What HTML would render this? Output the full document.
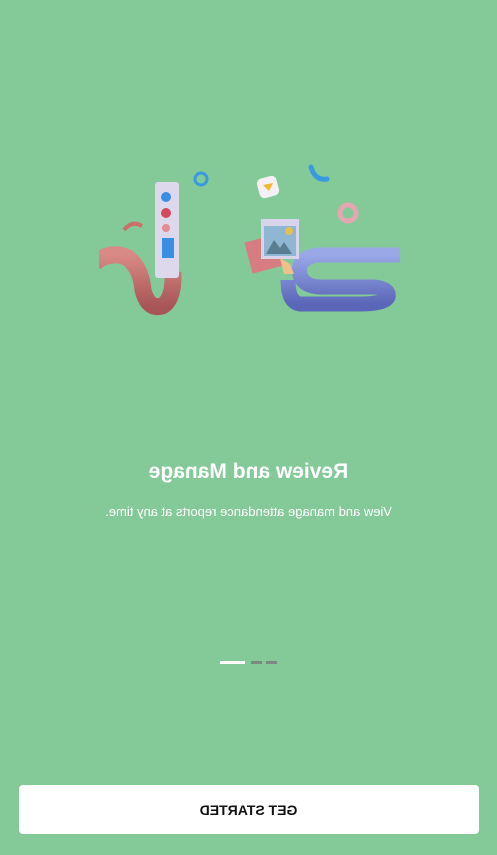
<!DOCTYPE html>
<html><head><meta charset="utf-8"><style>
html,body{margin:0;padding:0}
body{width:497px;height:855px;background:#84ca99;position:relative;overflow:hidden;font-family:"Liberation Sans",sans-serif}
.m{transform:scaleX(-1);position:absolute;left:0;width:497px;text-align:center;color:#fff}
</style></head><body>
<svg width="497" height="855" style="position:absolute;left:0;top:0">
<defs>
<linearGradient id="pk" x1="0" y1="0" x2="0" y2="1"><stop offset="0" stop-color="#d98a86"/><stop offset="1" stop-color="#a85555"/></linearGradient>
<linearGradient id="bl" x1="0" y1="0" x2="0" y2="1"><stop offset="0" stop-color="#9aa8e8"/><stop offset="1" stop-color="#5a66b8"/></linearGradient>
<clipPath id="c"><rect x="99" y="0" width="302" height="400"/></clipPath>
</defs>
<g clip-path="url(#c)">
<path d="M95 262 Q112 250 128 258 Q141 268 143 290 Q148 310 162 306 Q174 300 173 272" fill="none" stroke="url(#pk)" stroke-width="17"/>
<path d="M400 255 H318 Q296 258 300 275 Q304 288 325 287 H375 Q390 289 388 297 Q384 304 360 304 H300 Q288 302 288 280" fill="none" stroke="url(#bl)" stroke-width="15"/>
</g>
<rect x="155" y="182" width="24" height="96" rx="3" fill="#ddd8ec"/>
<circle cx="166" cy="197" r="5" fill="#3a8ee6"/>
<circle cx="166" cy="213" r="5" fill="#d14a5e"/>
<circle cx="166" cy="228" r="4" fill="#e68a94"/>
<path d="M162 238 h12 v20 h-12z" fill="#3b8fe0"/>
<path d="M124 230 q8 -10 18 -4" fill="none" stroke="#c8706a" stroke-width="4"/>
<circle cx="201" cy="179" r="6" fill="none" stroke="#3a9ae0" stroke-width="3"/>
<rect x="258" y="177" width="20" height="20" rx="5" fill="#f4f0f4" transform="rotate(-15 268 187)"/>
<path d="M263 185 l10 -2 l-4 8z" fill="#f2b82a"/>
<path d="M311 167 q4 14 16 12" fill="none" stroke="#3a9ae0" stroke-width="5" stroke-linecap="round"/>
<circle cx="348" cy="213" r="8" fill="none" stroke="#e6a6b0" stroke-width="5"/>
<rect x="248" y="238" width="32" height="32" fill="#d77d82" transform="rotate(-15 264 254)"/>
<rect x="261" y="219" width="38" height="40" fill="#d8d4ec"/>
<rect x="264" y="226" width="32" height="30" fill="#8fb6d2"/>
<path d="M266 254 l8 -14 l6 8 l4 -6 l8 12z" fill="#5a7d92"/>
<circle cx="289" cy="231" r="4" fill="#e3c056"/>
<path d="M280 258 l10 6 l4 10 l-10 0z" fill="#f0c08a"/>
</svg>
<div class="m" style="top:460px;font-size:21px;font-weight:bold">Review and Manage</div>
<div class="m" style="top:504px;font-size:13px">View and manage attendance reports at any time.</div>
<div style="position:absolute;left:220px;top:661px;width:25px;height:3px;background:#fff"></div>
<div style="position:absolute;left:251px;top:661px;width:11px;height:3px;background:#7d8a80"></div>
<div style="position:absolute;left:266px;top:661px;width:11px;height:3px;background:#7d8a80"></div>
<div style="position:absolute;left:19px;top:785px;width:460px;height:49px;background:#fff;border-radius:4px"></div>
<div class="m" style="top:802px;font-size:14px;font-weight:bold;color:#111">GET STARTED</div>
</body></html>
